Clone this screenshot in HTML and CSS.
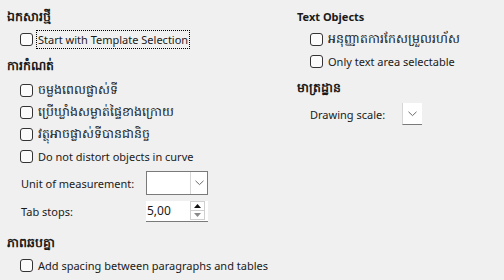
FILE: index.html
```
<!DOCTYPE html>
<html lang="km">
<head>
<meta charset="utf-8">
<link rel="stylesheet" href="styles.css">
</head>
<body>
<div class="page">
  <div class="col left">
    <div class="heading km">ឯកសារថ្មី</div>
    <label class="row cb"><span class="box"></span><span class="focus">Start with Template Selection</span></label>

    <div class="heading km gap">ការកំណត់</div>
    <div class="group">
      <label class="row cb"><span class="box"></span><span class="km">ចម្លងពេលផ្លាស់ទី</span></label>
      <label class="row cb"><span class="box"></span><span class="km">ប្រើឃ្លាំងសម្ងាត់ផ្ទៃខាងក្រោយ</span></label>
      <label class="row cb"><span class="box"></span><span class="km">វត្ថុអាចផ្លាស់ទីបានជានិច្ច</span></label>
      <label class="row cb"><span class="box"></span><span>Do not distort objects in curve</span></label>
    </div>
    <div class="field unit">
      <span class="flabel">Unit of measurement:</span>
      <span class="combo">
        <span class="ctext"></span>
        <span class="cbtn"><svg width="9" height="6" viewBox="0 0 9 6"><path d="M0.5 0.8 L4.5 4.6 L8.5 0.8" fill="none" stroke="#6b6b6b" stroke-width="1"/></svg></span>
      </span>
    </div>
    <div class="field tab">
      <span class="flabel">Tab stops:</span>
      <span class="spin">
        <span class="stext">5,00</span>
        <span class="sbtns">
          <span class="sbtn"><svg width="7" height="4" viewBox="0 0 7 4"><path d="M0 4 L3.5 0 L7 4 Z" fill="#111"/></svg></span>
          <span class="sbtn"><svg width="7" height="4" viewBox="0 0 7 4"><path d="M0 0 L3.5 4 L7 0 Z" fill="#8a8a8a"/></svg></span>
        </span>
      </span>
    </div>

    <div class="heading km gap2">ភាពឆបគ្នា</div>
    <label class="row cb"><span class="box"></span><span>Add spacing between paragraphs and tables</span></label>
  </div>

  <div class="col right">
    <div class="heading">Text Objects</div>
    <label class="row cb"><span class="box"></span><span class="km">អនុញ្ញាតការកែសម្រួលរហ័ស</span></label>
    <label class="row cb"><span class="box"></span><span>Only text area selectable</span></label>

    <div class="heading km gap">មាត្រដ្ឋាន</div>
    <div class="field scale">
      <span class="flabel">Drawing scale:</span>
      <span class="minicombo"><svg width="9" height="6" viewBox="0 0 9 6"><path d="M0.5 0.8 L4.5 4.6 L8.5 0.8" fill="none" stroke="#6b6b6b" stroke-width="1"/></svg></span>
    </div>
  </div>
</div>
</body>
</html>
```
FILE: styles.css
```
html, body {
  margin: 0;
  padding: 0;
  background: #f0f0f0;
}
body {
  width: 504px;
  height: 280px;
  overflow: hidden;
  font-family: "Noto Sans", "Open Sans", sans-serif;
  font-size: 11px;
  color: #1a1a1a;
}
.page {
  display: grid;
  grid-template-columns: 290px 1fr;
  padding: 6px 0 0 7px;
}
.col {
  display: flex;
  flex-direction: column;
}
.heading {
  height: 22px;
  line-height: 22px;
  font-weight: bold;
  white-space: nowrap;
  overflow: visible;
}
.heading.km { font-size: 12.5px; }
.row .km { font-size: 12.5px; line-height: 22px; }
.heading.gap { margin-top: 5px; }
.heading.gap2 { margin-top: 10px; }
.group {
  display: flex;
  flex-direction: column;
  margin-top: 2px;
}
.row {
  height: 22px;
  display: flex;
  align-items: center;
  padding-left: 13px;
  white-space: nowrap;
}
.box {
  width: 11px;
  height: 11px;
  border: 1px solid #333;
  border-radius: 3px;
  background: #fbfbfb;
  margin-right: 5px;
  flex: none;
}
.focus {
  outline: 1px dotted #000;
  outline-offset: 0;
  padding: 0 1px;
  line-height: 17px;
  margin-left: -1px;
}
.field {
  display: flex;
  align-items: center;
  padding-left: 14px;
  white-space: nowrap;
}
.flabel {
  width: 125px;
}
.unit { height: 24px; margin-top: 4px; }
.tab { height: 22px; margin-top: 5px; }
.combo {
  display: flex;
  width: 60px;
  height: 22px;
  border: 1px solid #7a7a7a;
  background: #fff;
}
.ctext { flex: 1; }
.cbtn {
  width: 16px;
  border-left: 1px solid #d6d6d6;
  display: flex;
  align-items: center;
  justify-content: center;
}
.spin {
  display: flex;
  align-items: center;
  width: 62px;
  height: 21px;
  background: #fff;
  border-bottom: 1px solid #7a7a7a;
  box-sizing: border-box;
}
.stext {
  flex: 1;
  padding-left: 1px;
  font-size: 12px;
}
.sbtns {
  display: flex;
  flex-direction: column;
  margin-right: 3px;
}
.sbtn {
  width: 13px;
  height: 8px;
  border: 1px solid #d0d0d0;
  background: #fff;
  display: flex;
  align-items: center;
  justify-content: center;
}
.sbtn + .sbtn { border-top: none; }
.scale {
  height: 24px;
  margin-top: 3px;
  padding-left: 13px;
}
.scale .flabel { width: 92px; }
.minicombo {
  width: 19px;
  height: 21px;
  background: #fff;
  border-left: 1px solid #d6d6d6;
  border-bottom: 1px solid #7a7a7a;
  display: flex;
  align-items: center;
  justify-content: center;
}
```
